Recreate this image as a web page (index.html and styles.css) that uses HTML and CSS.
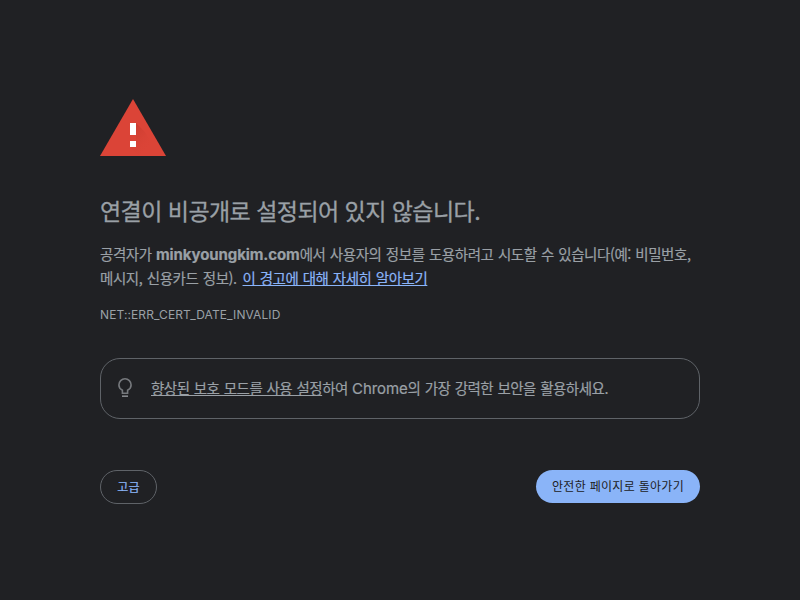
FILE: index.html
```html
<!DOCTYPE html>
<html lang="ko">
<head>
<meta charset="utf-8">
<title>개인 정보 보호 오류</title>
<link rel="stylesheet" href="styles.css">
</head>
<body>
<main class="interstitial">
  <svg class="warning-icon" viewBox="0 0 66 57" aria-hidden="true">
    <defs>
      <linearGradient id="shade" x1="0" y1="0" x2="1" y2="1">
        <stop offset="0" stop-color="#b93428" stop-opacity=".7"/>
        <stop offset=".7" stop-color="#db4437" stop-opacity="0"/>
      </linearGradient>
    </defs>
    <path fill="#db4437" d="M33 0 66 57H0z"/>
    <path fill="url(#shade)" d="M36 24 45 33 59 57H39L30 48 36 42z"/>
    <path fill="#fff" d="M30 24h6v12h-6zM30 42h6v6h-6z"/>
  </svg>
  <h1 class="title">연결이 비공개로 설정되어 있지 않습니다.</h1>
  <p class="message"><span>공격자가 <strong class="host">minkyoungkim.com</strong>에서 사용자의 정보를 도용하려고 시도할 수 있습니다(예: 비밀번호,</span><br><span>메시지, 신용카드 정보). <a class="learn-more" href="#">이 경고에 대해 자세히 알아보기</a></span></p>
  <div class="error-code">NET::ERR_CERT_DATE_INVALID</div>
  <section class="protection">
    <svg class="bulb-icon" viewBox="0 0 14 20" aria-hidden="true">
      <path fill="none" stroke="#76797d" stroke-width="1.6" d="M4.4 15.2V12.3C2.2 11 .9 9.200 .9 6.900a6.100 6.100 0 0 1 12.200 0c0 2.300-1.300 4.100-3.500 5.400v2.900z"/>
      <path stroke="#85888c" stroke-width="1.600" d="M4 18.200h6"/>
    </svg>
    <p class="protection-text"><a class="protection-link" href="#">향상된 보호 모드를 사용 설정</a><span>하여 </span><span class="latin">Chrome</span><span>의 가장 강력한 보안을 활용하세요.</span></p>
  </section>
  <div class="actions">
    <button class="button details">고급</button>
    <button class="button primary">안전한 페이지로 돌아가기</button>
  </div>
</main>
</body>
</html>
```
FILE: styles.css
```css
body {
  margin: 0;
  background: #202124;
  color: #9aa0a6;
  font-family: "Noto Sans CJK KR", sans-serif;
}

.interstitial {
  width: 600px;
  margin: 0 auto;
  padding-top: 99px;
}

.warning-icon {
  display: block;
  width: 66px;
  height: 57px;
}

.title {
  margin: 38px 0 16px;
  font-size: 23px;
  font-weight: 400;
  line-height: 32px;
  letter-spacing: -0.540px;
  white-space: nowrap;
  -webkit-text-stroke: 0.300px;
}

.message {
  height: 48px;
  margin: 0;
  font-size: 14.500px;
  line-height: 24px;
  letter-spacing: -0.420px;
  word-spacing: 0.700px;
  white-space: nowrap;
  -webkit-text-stroke: 0.200px;
}

.host {
  font-family: Inter, sans-serif;
  font-size: 15px;
  font-weight: 700;
  line-height: 0;
  letter-spacing: -0.100px;
}

.learn-more {
  margin-left: 1.500px;
  color: #8ab4f8;
  letter-spacing: -0.450px;
}

.error-code {
  margin-top: 15px;
  font-family: Inter, sans-serif;
  font-size: 12px;
  line-height: 20px;
  letter-spacing: 0.100px;
}

.protection {
  box-sizing: border-box;
  display: flex;
  align-items: center;
  height: 61px;
  margin-top: 33px;
  padding: 0 0 2px 17px;
  border: 1px solid #5f6368;
  border-radius: 20px;
}

.bulb-icon {
  width: 14px;
  height: 20px;
  margin-right: 19px;
}

.protection-text {
  height: 22px;
  margin: 0;
  font-size: 14.500px;
  line-height: 22px;
  letter-spacing: -0.500px;
  word-spacing: 0.700px;
  white-space: nowrap;
  -webkit-text-stroke: 0.200px;
}

.protection-link {
  color: inherit;
}

.latin {
  font-family: Inter, sans-serif;
  font-size: 15px;
  line-height: 0;
  letter-spacing: -0.100px;
}

.actions {
  display: flex;
  justify-content: space-between;
  align-items: flex-start;
  margin-top: 51px;
}

.button {
  box-sizing: border-box;
  padding: 0 0 2px;
  border: 0;
  border-radius: 17px;
  font-family: inherit;
  font-size: 12px;
  letter-spacing: 0.300px;
  white-space: nowrap;
}

.details {
  width: 57px;
  height: 34px;
  border: 1px solid #5f6368;
  background: transparent;
  color: #8ab4f8;
  -webkit-text-stroke: 0.200px;
}

.primary {
  width: 164px;
  height: 32.500px;
  background: #8ab4f8;
  color: #202124;
}
```
